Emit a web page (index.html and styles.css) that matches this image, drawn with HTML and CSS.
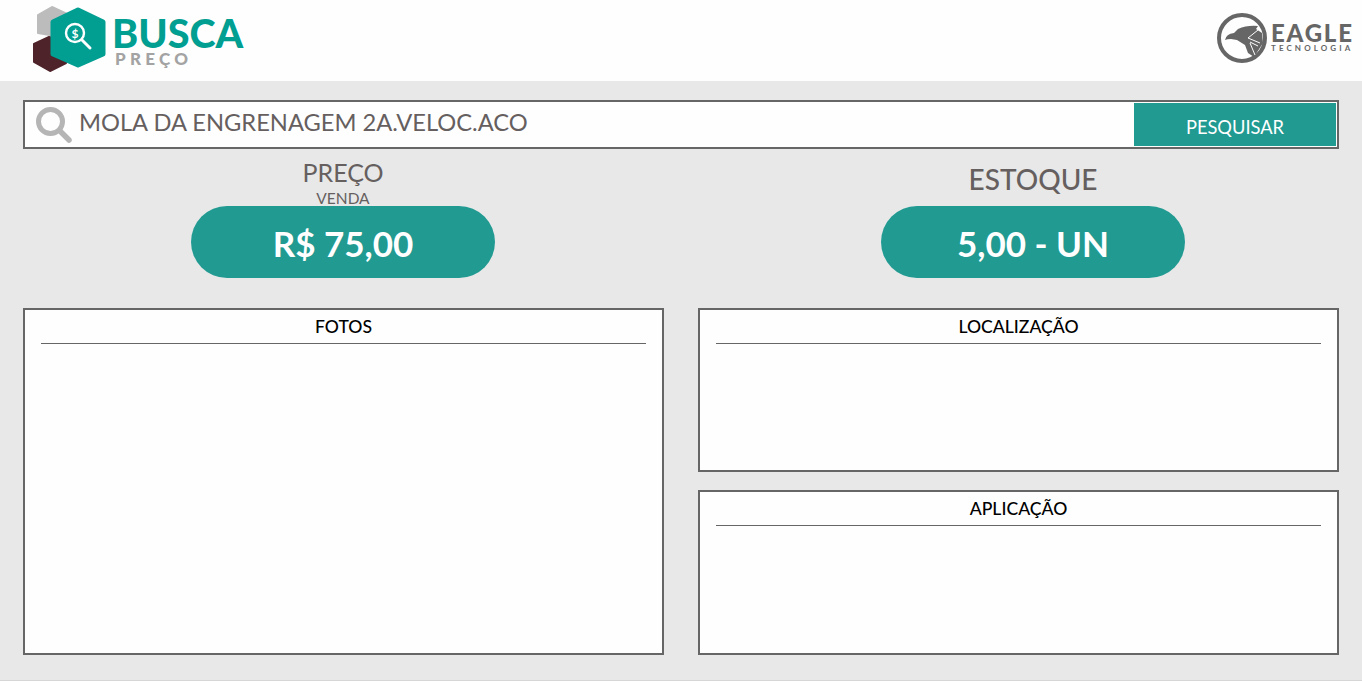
FILE: index.html
```html
<!DOCTYPE html>
<html lang="pt-BR">
<head>
    <meta charset="UTF-8">
    <title>Busca Preço</title>
    <link rel="stylesheet" href="styles.css">
</head>
<body>

    <header class="topbar">
        <div class="logo">
            <svg class="logo-mark" width="82" height="76" viewBox="0 0 82 76">
                <polygon points="6,15 20,7 35,14 35,38 6,33" fill="#bcbcbc" stroke="#bcbcbc" stroke-width="2" stroke-linejoin="round"/>
                <polygon points="2,44 17,37 34,41 34,63 18,71 2,62" fill="#4e2329" stroke="#4e2329" stroke-width="2" stroke-linejoin="round"/>
                <polygon points="46,10 71,22 71,54 46,65 21,54 21,22" fill="#019e92" stroke="#019e92" stroke-width="5" stroke-linejoin="round"/>
                <circle cx="43" cy="33" r="9" fill="none" stroke="#fff" stroke-width="2.4"/>
                <path d="M50 40 L58 48" stroke="#fff" stroke-width="3" stroke-linecap="round"/>
                <text x="43" y="37.5" class="logo-dollar">$</text>
            </svg>
            <div class="logo-text">
                <span class="logo-busca">BUSCA</span>
                <span class="logo-preco">PREÇO</span>
            </div>
        </div>
        <div class="eagle">
            <svg width="50" height="50" viewBox="0 0 50 50">
                <circle cx="25" cy="25" r="23" fill="none" stroke="#666" stroke-width="4"/>
                <path d="M8 27 Q9 21 17 20 L21 16 Q30 12 41 13 L39 16 L45 20 L46 30 L37 44 L31 40 L28 32 L20 27 L14 26 Q10 26 8 27 Z" fill="#666"/>
                <path d="M41 17 L31 25 L43 30 M33 29 L41 33 M33 30 L38 42" stroke="#fefefe" stroke-width="1" fill="none"/>
            </svg>
            <div class="eagle-text">
                <span class="eagle-name">EAGLE</span>
                <span class="eagle-sub">TECNOLOGIA</span>
            </div>
        </div>
    </header>

    <main class="content">
        <div class="search-bar">
            <svg class="search-icon" width="37" height="37" viewBox="0 0 37 37">
                <circle cx="14.5" cy="14.5" r="12" fill="none" stroke="#b5b5b5" stroke-width="5"/>
                <path d="M24 24 L33 33" stroke="#b5b5b5" stroke-width="5.5" stroke-linecap="round"/>
            </svg>
            <span class="search-text">MOLA DA ENGRENAGEM 2A.VELOC.ACO</span>
            <button class="search-button">PESQUISAR</button>
        </div>

        <div class="totals">
            <section class="total">
                <h2 class="total-title">PREÇO</h2>
                <p class="total-sub">VENDA</p>
                <div class="pill">R$ 75,00</div>
            </section>
            <section class="total">
                <h2 class="total-title total-big">ESTOQUE</h2>
                <div class="pill">5,00 - UN</div>
            </section>
        </div>

        <div class="panels">
            <section class="panel">
                <h3 class="panel-title">FOTOS</h3>
            </section>
            <div class="panel-stack">
                <section class="panel panel-short">
                    <h3 class="panel-title">LOCALIZAÇÃO</h3>
                </section>
                <section class="panel panel-low">
                    <h3 class="panel-title">APLICAÇÃO</h3>
                </section>
            </div>
        </div>
    </main>

</body>
</html>
```

FILE: styles.css
```css
* {
    margin: 0;
    padding: 0;
    box-sizing: border-box;
}

body {
    width: 1362px;
    height: 681px;
    overflow: hidden;
    font-family: 'Lato', 'Open Sans', sans-serif;
    background-color: #e8e8e8;
    border-bottom: 1px solid #d6d6d6;
    color: #665f5f;
}

.topbar {
    height: 81px;
    background: #fefefe;
    display: flex;
    justify-content: space-between;
    padding: 0 9px 0 32px;
}

.logo {
    display: flex;
    height: 76px;
}

.logo-mark {
    flex: none;
}

.logo-dollar {
    font-size: 12px;
    font-weight: 700;
    fill: #fff;
    text-anchor: middle;
}

.logo-text {
    display: flex;
    flex-direction: column;
    margin-top: 15px;
}

.logo-busca {
    font-size: 39.5px;
    font-weight: 900;
    line-height: 36px;
    margin-left: -2px;
    color: #019e92;
}

.logo-preco {
    font-size: 17px;
    font-weight: 900;
    line-height: 16px;
    letter-spacing: 4.3px;
    color: #a3a3a3;
    margin-left: 1px;
}

.eagle {
    display: flex;
    align-items: flex-start;
    gap: 4px;
    padding-top: 13px;
}

.eagle svg {
    flex: none;
}

.eagle-text {
    width: 82px;
    display: flex;
    flex-direction: column;
    padding-top: 8px;
    color: #666;
}

.eagle-name {
    font-size: 24px;
    font-weight: 900;
    line-height: 23px;
    letter-spacing: 1.8px;
}

.eagle-sub {
    font-size: 8px;
    font-weight: 700;
    line-height: 8px;
    letter-spacing: 3.1px;
    white-space: nowrap;
}

.content {
    padding: 19px 23px 0;
}

.search-bar {
    height: 49px;
    background: #fefefe;
    border: 2px solid #666;
    display: flex;
    padding: 1px;
}

.search-icon {
    margin: 4px 0 0 10px;
    flex: none;
}

.search-text {
    flex: 1;
    font-size: 23.7px;
    line-height: 38px;
    padding-left: 6px;
    color: #665f5f;
}

.search-button {
    width: 202px;
    border: none;
    background: #219a92;
    color: #fff;
    font-family: inherit;
    font-size: 18.3px;
    padding-top: 4px;
}

.totals {
    display: flex;
    height: 129px;
}

.total {
    height: 100%;
    display: flex;
    flex-direction: column;
    align-items: center;
    justify-content: flex-end;
}

.total:first-child {
    width: 640px;
}

.total:last-child {
    width: 675px;
    padding-left: 65px;
}

.total-title {
    font-size: 25px;
    font-weight: 400;
    line-height: 28px;
    margin-bottom: 3px;
}

.total-big {
    font-size: 28px;
    font-weight: 500;
    margin-bottom: 13px;
}

.total-sub {
    font-size: 15.5px;
    line-height: 18px;
    margin-bottom: -1px;
}

.pill {
    width: 304px;
    height: 72px;
    border-radius: 36px;
    background: #219a92;
    color: #fff;
    font-size: 35px;
    font-weight: 700;
    line-height: 74px;
    text-align: center;
}

.panels {
    display: flex;
    gap: 34px;
    margin-top: 30px;
}

.panel {
    width: 641px;
    height: 347px;
    background: #fefefe;
    border: 2px solid #666;
    padding: 0 16px;
}

.panel-stack {
    display: flex;
    flex-direction: column;
    gap: 18px;
}

.panel-short {
    height: 164px;
}

.panel-low {
    height: 165px;
}

.panel-title {
    height: 34px;
    border-bottom: 1px solid #666;
    color: #000;
    font-size: 17.6px;
    font-weight: 500;
    line-height: 34px;
    text-align: center;
}
```
